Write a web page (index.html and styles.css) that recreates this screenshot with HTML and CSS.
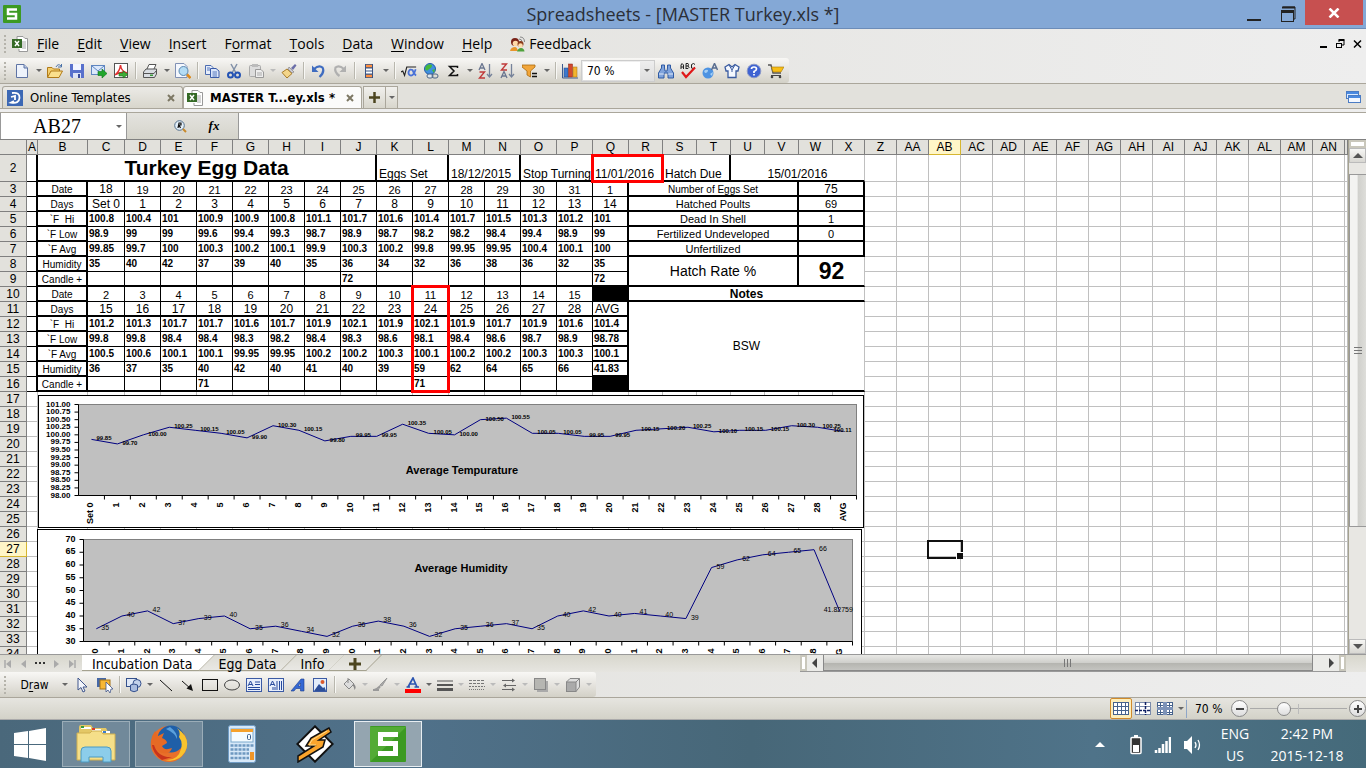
FILE: index.html
```
<!DOCTYPE html>
<html lang="en">
<head>
  <meta charset="UTF-8" />
  <meta name="viewport" content="width=device-width, initial-scale=1.0" />
  <title>Spreadsheets - [MASTER Turkey.xls *]</title>
  <link rel="stylesheet" href="styles.css">
</head>
<body>

  <header class="titlebar">
    <svg class="app-logo" viewBox="0 0 20 20" width="20" height="20"><rect x="1" y="1" width="18" height="18" rx="1" fill="#3c9a22"/><path d="M15 5.500H6V10H14V14.500H5" fill="none" stroke="#fff" stroke-width="2.500"/></svg>
    <h1>Spreadsheets - [MASTER Turkey.xls *]</h1>
    <div class="window-buttons">
      <button aria-label="Minimize"><svg width="16" height="20"><path d="M1 17H15" stroke="#222" stroke-width="2"/></svg></button>
      <button aria-label="Restore"><svg width="16" height="20"><path d="M3 5V4H15V16H14" fill="none" stroke="#222" stroke-width="1"/><path d="M2 4.500H15" stroke="#222" stroke-width="2"/><rect x="1.500" y="7.500" width="12" height="11" fill="#84a8d6" stroke="#222"/><path d="M1 8.500H14" stroke="#222" stroke-width="3"/></svg></button>
      <button class="close" aria-label="Close"><svg width="12" height="10"><path d="M1.500 .5L10.500 9.500M10.500 .5L1.500 9.500" stroke="#fff" stroke-width="2.500"/></svg></button>
    </div>
  </header>

  <nav class="menubar">
    <span class="handle"></span>
    <svg class="doc-icon" viewBox="0 0 16 16" width="16" height="16"><path d="M5 .5H11L13 2.500H15.500V15.500H7V13M5 .5V3" fill="#fff" stroke="#999"/><path d="M10 6H14M10 8H14M10 10H14M10 12H14" stroke="#aaa"/><rect y="3" width="10" height="9" fill="#356a26"/><path d="M3 5L7 10M7 5L3 10" stroke="#fff" stroke-width="1.500"/></svg>
    <button><u>F</u>ile</button>
    <button><u>E</u>dit</button>
    <button><u>V</u>iew</button>
    <button><u>I</u>nsert</button>
    <button>F<u>o</u>rmat</button>
    <button><u>T</u>ools</button>
    <button><u>D</u>ata</button>
    <button><u>W</u>indow</button>
    <button><u>H</u>elp</button>
    <button class="feedback"><svg viewBox="0 0 16 16" width="16" height="16"><path d="M9 3Q12 3 12 6M10 1Q14.500 1 14.500 6" fill="none" stroke="#888"/><circle cx="5" cy="6" r="4" fill="#7a2318"/><circle cx="5.500" cy="7.500" r="2.800" fill="#ffd9a8"/><circle cx="10.500" cy="8" r="3" fill="#8a3a1c"/><circle cx="10.500" cy="9.500" r="2.300" fill="#ffdcae"/><path d="M0 15Q1 11 5 11Q7 11 8 15Z" fill="#e8952c"/><path d="M7 15.500Q8 12 11 12Q14 12 14.500 15.500Z" fill="#4fa23c"/></svg>Feed<u>b</u>ack</button>
    <div class="doc-buttons">
      <button aria-label="Minimize document"><svg width="8" height="10"><path d="M0 8H7" stroke="#000" stroke-width="2"/></svg></button>
      <button aria-label="Restore document"><svg width="9" height="10"><path d="M3 3V1.500H8V6H6" fill="none" stroke="#000"/><path d="M2.500 1H8.500" stroke="#000" stroke-width="2"/><rect x=".5" y="4.500" width="5" height="4" fill="none" stroke="#000"/></svg></button>
      <button aria-label="Close document"><svg width="9" height="10"><path d="M1 1.500L8 8.500M8 1.500L1 8.500" stroke="#000" stroke-width="1.500"/></svg></button>
    </div>
  </nav>

  <div class="toolbar-row">
    <div class="toolbar">
      <span class="handle"></span>
      <button aria-label="New"><svg viewBox="0 0 16 16"><path d="M2.500 1.500H10L13.500 5V14.500H2.500Z" fill="#eef3fc" stroke="#5f74a4"/><path d="M10 1.500V5H13.500" fill="#b9c8e4" stroke="#5f74a4"/></svg></button>
      <button class="drop" aria-label="New options"></button>
      <button aria-label="Open"><svg viewBox="0 0 16 16"><path d="M.5 14V4.500H5L6.500 6H12.500V8" fill="#f5cf6c" stroke="#b07a18"/><path d="M.5 14.500L4 8H15.500L12 14.500Z" fill="#fbe08c" stroke="#b07a18"/><path d="M9 4Q11 0 14 3M14.500 1V4H11" fill="none" stroke="#4a71a8"/></svg></button>
      <button aria-label="Save"><svg viewBox="0 0 16 16"><path d="M1 1H15V15H3L1 13Z" fill="#5870cc"/><rect x="4" y="1" width="8" height="6" fill="#f2f5ff"/><rect x="4" y="10" width="8" height="5" fill="#dce2f5"/><rect x="9" y="11" width="2" height="4" fill="#384a9c"/></svg></button>
      <button aria-label="Send mail"><svg viewBox="0 0 16 16"><rect x=".5" y="2.500" width="13" height="9" fill="#dbe8fb" stroke="#5f86c0"/><path d="M1 3L7 8L13 3" fill="none" stroke="#5f86c0"/><path d="M7 8.500H11V6L16 10.500L11 15V12.500H7Z" fill="#21a62b" stroke="#0b7417" stroke-width=".6"/></svg></button>
      <button aria-label="Export PDF"><svg viewBox="0 0 16 16"><rect x="1.500" y=".5" width="13" height="14" fill="#fff" stroke="#555"/><path d="M2 12Q7 8 7.500 2Q8 8 14 10Q8 8 2 12" fill="none" stroke="#e03030" stroke-width="1.500"/><path d="M6 10H10V8L15 11.500L10 15V13H6Z" fill="#3fae38" stroke="#1b6e1b" stroke-width=".6"/></svg></button>
      <span class="sep"></span>
      <button aria-label="Print"><svg viewBox="0 0 16 16"><path d="M5 6L7 1.500H14L12 6" fill="#fff" stroke="#555"/><path d="M1.500 9L4 6H14.500V11L12.500 14.500H1.500Z" fill="#d9dde2" stroke="#555"/><path d="M2 10.500H12L14 8" fill="none" stroke="#555"/><rect x="8" y="11.500" width="3" height="1.500" fill="#3a9c3a"/></svg></button>
      <button class="drop" aria-label="Print options"></button>
      <button aria-label="Print preview"><svg viewBox="0 0 16 16"><path d="M.5 .5H9L12 3.500V14.500H.5Z" fill="#f4f7fd" stroke="#8090b4"/><circle cx="8.500" cy="8" r="4.500" fill="#b4dcf4" stroke="#5c88b0"/><path d="M12 11.500L15.500 15" stroke="#dd8a1c" stroke-width="2.500"/></svg></button>
      <span class="sep"></span>
      <button aria-label="Copy"><svg viewBox="0 0 16 16"><path d="M1.500 2.500H7L9 4.500V11.500H1.500Z" fill="#e6edfa" stroke="#4c6cb0"/><path d="M6.500 5.500H12L15 8V14.500H6.500Z" fill="#dbe6fb" stroke="#3a5ba8"/><path d="M3 5H6M3 7H6M8.500 9H13M8.500 11H13M8.500 13H13" stroke="#5476bc"/></svg></button>
      <button aria-label="Cut"><svg viewBox="0 0 16 16"><path d="M5 1L10 10M11 1L6 10" stroke="#8090a8" stroke-width="1.500"/><circle cx="4.500" cy="12" r="2.500" fill="none" stroke="#2453b4" stroke-width="2"/><circle cx="11.500" cy="12" r="2.500" fill="none" stroke="#2453b4" stroke-width="2"/></svg></button>
      <button aria-label="Paste"><svg viewBox="0 0 16 16"><rect x="1.500" y="2.500" width="11" height="11" rx="1" fill="#ddd" stroke="#aaa"/><rect x="4" y="1" width="6" height="3" fill="#bbb"/><path d="M7.500 6.500H13L15.500 9V14.500H7.500Z" fill="#eee" stroke="#999"/><path d="M9 10H14M9 12H14" stroke="#aaa"/></svg></button>
      <button class="drop dim" aria-label="Paste options"></button>
      <button aria-label="Format painter"><svg viewBox="0 0 16 16"><path d="M10 5L14 1L15.500 2.500L12 7Z" fill="#6b6ea8"/><path d="M8 4L13 9L11 10L7 6Z" fill="#c9c9d8" stroke="#777" stroke-width=".6"/><path d="M6 6L11 10.500L6 15L1 9.500Z" fill="#f3d58a" stroke="#a77b2a"/></svg></button>
      <span class="sep"></span>
      <button aria-label="Undo"><svg viewBox="0 0 16 16"><path d="M4 6Q9 1.500 12.500 4.500Q15 9 9.500 14" fill="none" stroke="#3f6cc0" stroke-width="2.200"/><path d="M2 2.500V9H8.500Z" fill="#3f6cc0"/></svg></button>
      <button aria-label="Redo"><svg viewBox="0 0 16 16"><path d="M12 6Q7 1.500 3.500 4.500Q2 9 7.500 13" fill="none" stroke="#b0b0b0" stroke-width="2.200"/><path d="M14 2.500V9H7.500Z" fill="#b0b0b0"/></svg></button>
      <span class="sep"></span>
      <button aria-label="Rows"><svg viewBox="0 0 16 16"><rect x="4" y="1" width="8" height="14" fill="#3b5484"/><path d="M5 3H11" stroke="#ff9040" stroke-width="2.500"/><path d="M5 6.500H11M5 9.500H11" stroke="#fff" stroke-width="2"/><path d="M5 13H11" stroke="#ff9040" stroke-width="2.500"/></svg></button>
      <button class="drop" aria-label="Row options"></button>
      <span class="sep"></span>
      <button aria-label="Equation"><svg viewBox="0 0 18 16"><path d="M0 9L2 8L4 13L6.500 3.500H17" fill="none" stroke="#222" stroke-width="1.300"/><path d="M16.500 6Q14 14 10.500 13Q8 12 8.500 9Q10 5 13 7Q15 12 17 13" fill="none" stroke="#4a72d8" stroke-width="2"/></svg></button>
      <button aria-label="Hyperlink"><svg viewBox="0 0 16 16"><circle cx="7" cy="6" r="5.500" fill="#3f8fe0" stroke="#215ba8"/><path d="M3 3Q6 0 9 2Q9 5 6 6Q4 9 2 6ZM9 7L12 6L11 10Z" fill="#45b83a"/><rect x="4" y="11" width="6" height="4" rx="2" fill="#dfe7ef" stroke="#4c6688"/><rect x="9" y="11" width="6" height="4" rx="2" fill="none" stroke="#4c6688"/></svg></button>
      <button aria-label="AutoSum"><svg viewBox="0 0 16 16"><path d="M12.500 5V3.500H4.500L9 8L4.500 12.500H12.500V11" fill="none" stroke="#111" stroke-width="1.500"/></svg></button>
      <button class="drop" aria-label="Sum options"></button>
      <button aria-label="Sort ascending"><svg viewBox="0 0 16 16"><path d="M1 7L4 .5L7 7M2 5H6" fill="none" stroke="#6a7690" stroke-width="1.300"/><path d="M1.500 9H6.500L1.500 15H7" fill="none" stroke="#c03a3a" stroke-width="1.400"/><path d="M11.500 1V13M9 11L11.500 14L14 11" fill="none" stroke="#76829a" stroke-width="1.300"/></svg></button>
      <button aria-label="Sort descending"><svg viewBox="0 0 16 16"><path d="M1.500 1H6.500L1.500 7H7" fill="none" stroke="#c03a3a" stroke-width="1.400"/><path d="M1 15L4 8.500L7 15M2 13H6" fill="none" stroke="#6a7690" stroke-width="1.300"/><path d="M11.500 1V13M9 11L11.500 14L14 11" fill="none" stroke="#76829a" stroke-width="1.300"/></svg></button>
      <button aria-label="Filter"><svg viewBox="0 0 16 16"><path d="M0 2H13V4L8.500 8V14L5 12V8L0 4Z" fill="#f2a63a" stroke="#a86a10" stroke-width=".8"/><path d="M10 10.500H15M10 13.500H15" stroke="#111" stroke-width="1.700"/></svg></button>
      <button class="drop" aria-label="Filter options"></button>
      <span class="sep"></span>
      <button aria-label="Chart"><svg viewBox="0 0 16 16"><path d="M.5 1V15H16" fill="none" stroke="#3c5a90"/><rect x="2" y="5" width="4" height="9" fill="#3f79cc" stroke="#1f4a8c" stroke-width=".5"/><rect x="6.500" y="1" width="4" height="13" fill="#d2492e" stroke="#8a2010" stroke-width=".5"/><rect x="11" y="4" width="4" height="10" fill="#f2b42e" stroke="#a87010" stroke-width=".5"/></svg></button>
      <div class="zoom-box"><select aria-label="Zoom"><option>70 %</option></select></div>
      <button aria-label="Find"><svg viewBox="0 0 16 16"><path d="M3.500 2H6.500V5L7 8H9L9.500 5V2H12.500V5L15.500 10V15H10V10H6V15H.5V10L3.500 5Z" fill="#7fa3dc" stroke="#2f5aa4"/><path d="M1 11H6M10 11H15" stroke="#dfe9fa"/></svg></button>
      <button aria-label="Spelling"><svg viewBox="0 0 16 16"><path d="M1 6V2L2 .5L3.500 2V6M1 4H3.500M6 .5V6M6 .5H8L8.500 1.500L8 3H6M8 3L9 4.500L8 5.500H6M15 1.500L13.500 .5L11.500 1.500V5L13.500 5.500L15 4.500" fill="none" stroke="#222"/><path d="M2 9L6 14L15 4.500" fill="none" stroke="#e01818" stroke-width="2.200"/></svg></button>
      <button aria-label="Translate"><svg viewBox="0 0 16 16"><circle cx="6" cy="10" r="5.500" fill="#4d93e2"/><path d="M2 8Q4 6 6 7Q6 10 3 10ZM8 11L11 9L10 13Z" fill="#a5d0f6"/><path d="M9.500 7L12.500 .5L15.500 7M10.500 5H14.500" fill="none" stroke="#5a6e90" stroke-width="1.500"/></svg></button>
      <button aria-label="Skins"><svg viewBox="0 0 16 16"><path d="M5 1.500L1 4L2 8H4V14.500H12V8H14L15 4L11 1.500L8 4Z" fill="#f4f8ff" stroke="#3a5ba0" stroke-width="1.300"/><path d="M5 2L8 7L11 2M8 7V9" fill="none" stroke="#3a5ba0"/></svg></button>
      <button aria-label="Help"><svg viewBox="0 0 16 16"><circle cx="8" cy="8" r="6.800" fill="#3f63d2" stroke="#8a98c8"/><path d="M5.500 6Q5.500 4 8 4Q10.500 4 10.500 6Q10.500 7.500 8 8.500V10M8 11V12.500" fill="none" stroke="#fff" stroke-width="1.700"/></svg></button>
      <button aria-label="Store"><svg viewBox="0 0 16 16"><path d="M0 2H3L5 10H13" fill="none" stroke="#555" stroke-width="1.400"/><path d="M3.500 4H16L13 9H5Z" fill="#f8bd14" stroke="#a67b08" stroke-width=".6"/><path d="M3 12.500H13" stroke="#444"/><circle cx="4" cy="14" r="1.300" fill="#444"/><circle cx="12" cy="14" r="1.300" fill="#444"/></svg></button>
    </div>
  </div>

  <div class="doc-tabs">
    <div class="doc-tab">
      <svg viewBox="0 0 16 16" width="16" height="16"><rect width="16" height="16" fill="#3c68b4"/><path d="M5 3Q13 2 12.500 8Q12 14 4 12.500L7 11M4 7L8 6V10" fill="none" stroke="#fff" stroke-width="1.800"/></svg>
      <a href="#templates">Online Templates</a>
      <button class="tab-close" aria-label="Close tab"><svg width="8" height="8"><path d="M1 1L7 7M7 1L1 7" stroke="#7d7864" stroke-width="2"/></svg></button>
    </div>
    <div class="doc-tab active">
      <svg viewBox="0 0 16 16" width="16" height="16"><path d="M5 .5H11L13 2.500H15.500V15.500H7V13M5 .5V3" fill="#fff" stroke="#999"/><path d="M10 6H14M10 8H14M10 10H14M10 12H14" stroke="#aaa"/><rect y="3" width="10" height="9" fill="#356a26"/><path d="M3 5L7 10M7 5L3 10" stroke="#fff" stroke-width="1.500"/></svg>
      <a href="#master">MASTER T...ey.xls *</a>
      <button class="tab-close" aria-label="Close tab"><svg width="8" height="8"><path d="M1 1L7 7M7 1L1 7" stroke="#7d7864" stroke-width="2"/></svg></button>
    </div>
    <div class="new-tab">
      <button aria-label="New tab"><svg width="11" height="11"><path d="M5.500 0V11M0 5.500H11" stroke="#4c451f" stroke-width="2.500"/></svg></button>
      <button class="drop" aria-label="Tab list"></button>
    </div>
    <button class="windows-list" aria-label="Windows"><svg width="16" height="13"><rect x=".5" y=".5" width="12" height="7" fill="#dcebff" stroke="#4b7cc4"/><path d="M1 2H12" stroke="#4b8ae0" stroke-width="2"/><rect x="2.500" y="4.500" width="12" height="7" fill="#f4f8ff" stroke="#4b7cc4"/><path d="M3 6H14" stroke="#4b8ae0" stroke-width="2"/></svg></button>
  </div>

  <div class="formula-bar">
    <div class="name-box"><input type="text" value="AB27" aria-label="Name box"><span class="drop"></span></div>
    <div class="formula-buttons">
      <button aria-label="Look up"><svg viewBox="0 0 13 13" width="13" height="13"><circle cx="5.500" cy="5.500" r="4.800" fill="#e4f0fa" stroke="#54708c"/><path d="M4 8L5 3H7L7 5H5L6.500 8" fill="none" stroke="#111" stroke-width="1.200"/><path d="M9 9L12 12" stroke="#c98a2a" stroke-width="2"/></svg></button>
      <button class="fx" aria-label="Insert function">fx</button>
    </div>
    <input class="formula" type="text" aria-label="Formula">
  </div>

  <main class="workbook">
    <div class="sheet" id="sheet">
      <table id="grid"></table>
      <div class="mark mark-stop"></div>
      <div class="mark mark-day"></div>
      <svg class="chart chart-temp" id="tempChart" width="826" height="133"></svg>
      <svg class="chart chart-hum" id="humChart" width="825" height="150"></svg>
    </div>
    <div class="vscroll">
      <span class="split"></span>
      <button class="up" aria-label="Scroll up"></button>
      <div class="vtrack"><div class="vthumb"></div></div>
      <button class="down" aria-label="Scroll down"></button>
    </div>
  </main>

  <div class="sheet-bar">
    <div class="sheet-nav">
      <button aria-label="First sheet"><svg width="8" height="8"><path d="M1 0V8" stroke="#aaa" stroke-width="1.500"/><path d="M7 0V8L2 4Z" fill="#aaa"/></svg></button>
      <button aria-label="Previous sheet"><svg width="8" height="8"><path d="M6 0V8L1 4Z" fill="#aaa"/></svg></button>
      <button aria-label="Sheet list"><svg width="10" height="8"><path d="M0 3H2M4 3H6M8 3H10" stroke="#333" stroke-width="2"/></svg></button>
      <button aria-label="Next sheet"><svg width="8" height="8"><path d="M2 0V8L7 4Z" fill="#aaa"/></svg></button>
      <button aria-label="Last sheet"><svg width="8" height="8"><path d="M7 0V8" stroke="#aaa" stroke-width="1.500"/><path d="M1 0V8L6 4Z" fill="#aaa"/></svg></button>
    </div>
    <div class="sheet-tabs">
      <button class="sheet-tab active"><span>Incubation Data</span></button>
      <button class="sheet-tab"><span>Egg Data</span></button>
      <button class="sheet-tab"><span>Info</span></button>
      <button class="sheet-tab add" aria-label="Add sheet"><span><svg width="14" height="14"><path d="M7 1V13M1 7H13" stroke="#4c451f" stroke-width="3"/></svg></span></button>
    </div>
    <div class="hscroll">
      <span class="hsplit"></span>
      <button class="left" aria-label="Scroll left"></button>
      <div class="htrack"><div class="hthumb"></div></div>
      <button class="right" aria-label="Scroll right"></button>
      <span class="hsplit"></span>
    </div>
    <span class="corner"></span>
  </div>

  <div class="draw-row">
    <div class="toolbar draw">
      <span class="handle"></span>
      <button class="draw-label">D<u>r</u>aw</button>
      <button class="drop wide" aria-label="Draw menu"></button>
      <button aria-label="Select"><svg viewBox="0 0 16 16"><path d="M3 1V13L6 10.500L8 15L10 14L8 10H12Z" fill="#f2f5fb" stroke="#40568c"/></svg></button>
      <button aria-label="Select objects"><svg viewBox="0 0 16 16"><rect x="0" y="1" width="9" height="9" fill="#4568a8"/><rect x="3" y="3" width="10" height="9" fill="#f8b834" stroke="#a87416"/><path d="M9 5V15L11 13L13 16L14 12H16Z" fill="#fff" stroke="#40568c" stroke-width=".8"/></svg></button>
      <span class="sep"></span>
      <button aria-label="Shapes"><svg viewBox="0 0 16 16"><rect x=".5" y="1.500" width="10" height="8" fill="#dfe8f7" stroke="#34508c"/><circle cx="11" cy="6.500" r="4" fill="#c3d2ec" stroke="#34508c"/><path d="M4.500 8V13.500Q8 16 11.500 13.500V8Q8 6 4.500 8" fill="#a9bcdf" stroke="#34508c"/></svg></button>
      <button class="drop" aria-label="Shapes menu"></button>
      <button aria-label="Line"><svg viewBox="0 0 16 16"><path d="M2 3L14 14" stroke="#111"/></svg></button>
      <button aria-label="Arrow"><svg viewBox="0 0 16 16"><path d="M2 4L11 12" stroke="#111"/><path d="M13 14L6.500 11.500L11 7Z" fill="#111"/></svg></button>
      <button aria-label="Rectangle"><svg viewBox="0 0 16 16"><rect x=".5" y="2.500" width="15" height="11" fill="none" stroke="#111"/></svg></button>
      <button aria-label="Oval"><svg viewBox="0 0 16 16"><ellipse cx="8" cy="8" rx="7.500" ry="5" fill="none" stroke="#444"/></svg></button>
      <button aria-label="Text box"><svg viewBox="0 0 16 16"><rect x=".5" y="1.500" width="15" height="13" fill="#e7eefb" stroke="#3b5aa4"/><path d="M2 9L4.500 4L7 9M3 7.500H6M9 5H14M9 7.500H14M2 10.500H14M2 12.500H14" fill="none" stroke="#27499c"/></svg></button>
      <button aria-label="Vertical text box"><svg viewBox="0 0 16 16"><rect x=".5" y="1.500" width="15" height="13" fill="#e7eefb" stroke="#3b5aa4"/><path d="M2 9L4.500 4L7 9M3 7.500H6M9 4V13M11.500 4V13M13.500 4V13M5 10V13M7 10V13" fill="none" stroke="#27499c"/></svg></button>
      <button aria-label="WordArt"><svg viewBox="0 0 16 16"><path d="M1 14L11 2H14V14H10.500V11.500H6L4 14ZM8 9H10.500V6Z" fill="#3568d4" stroke="#1b3d8c" stroke-width=".6" fill-rule="evenodd"/></svg></button>
      <button aria-label="Picture"><svg viewBox="0 0 16 16"><rect x="1.500" y="1.500" width="13" height="13" fill="#e3edfa" stroke="#3b5aa4"/><path d="M2 14L7 7L11 11L12.500 10L14 14Z" fill="#2c4f9a"/><circle cx="10.500" cy="5" r="2" fill="#dc5a2c"/></svg></button>
      <span class="sep"></span>
      <button aria-label="Fill colour"><svg viewBox="0 0 16 16"><path d="M3 7L8 2L13 7L8 12Z" fill="#ddd" stroke="#888"/><path d="M7 1V6" stroke="#888"/><path d="M13 7Q16 10 13.500 13Q13 9 11 8" fill="#888"/></svg></button>
      <button class="drop dim" aria-label="Fill menu"></button>
      <button aria-label="Line colour"><svg viewBox="0 0 16 16"><path d="M14 1L9 9L7 8Z" fill="#aaa" stroke="#999"/><path d="M7 8Q9 12 4 12L1 12Q4 11 7 8" fill="#999"/><path d="M0 13H6" stroke="#999" stroke-width="2"/></svg></button>
      <button class="drop dim" aria-label="Line colour menu"></button>
      <button aria-label="Font colour"><svg viewBox="0 0 16 16"><path d="M3 10L8 1L12 10M5 7H11M1.500 10H5M9.500 10H14" fill="none" stroke="#2c55b0" stroke-width="1.700"/><rect x="0" y="12" width="16" height="4" fill="#f00"/></svg></button>
      <button class="drop" aria-label="Font colour menu"></button>
      <button aria-label="Line style"><svg viewBox="0 0 16 16"><path d="M0 4H16" stroke="#555"/><path d="M0 8H16" stroke="#555" stroke-width="2"/><path d="M0 12.500H16" stroke="#555" stroke-width="3"/></svg></button>
      <button class="drop dim" aria-label="Line style menu"></button>
      <button aria-label="Dash style"><svg viewBox="0 0 16 16"><path d="M0 3.500H16M0 6.500H16" stroke="#777" stroke-dasharray="3 1"/><path d="M0 9.500H16" stroke="#777" stroke-dasharray="2 1"/><path d="M0 12.500H16" stroke="#777" stroke-dasharray="1 1"/></svg></button>
      <button class="drop dim" aria-label="Dash menu"></button>
      <button aria-label="Arrow style"><svg viewBox="0 0 16 16"><path d="M1 3.500H12M4 8.500H15M1 12.500H12" stroke="#666"/><path d="M11 1.500L14 3.500L11 5.500ZM5 6.500L2 8.500L5 10.500ZM11 10.500L14 12.500L11 14.500Z" fill="#666"/></svg></button>
      <button class="drop dim" aria-label="Arrow menu"></button>
      <button aria-label="Shadow"><svg viewBox="0 0 16 16"><rect x="4" y="4" width="11" height="11" fill="#aaa"/><rect x="1.500" y="1.500" width="11" height="11" fill="#b6b6b2" stroke="#888"/></svg></button>
      <button class="drop dim" aria-label="Shadow menu"></button>
      <button aria-label="3D"><svg viewBox="0 0 16 16"><path d="M1.500 5L5 1.500H14.500V10L11 14.500H1.500Z" fill="#ddd" stroke="#888"/><rect x="1.500" y="5" width="9.500" height="9.500" fill="#aaa" stroke="#888"/><path d="M11 5L14.500 1.500" stroke="#888"/></svg></button>
      <button class="drop dim" aria-label="3D menu"></button>
    </div>
  </div>

  <footer class="statusbar">
    <button class="view active" aria-label="Normal view"><svg width="16" height="14"><rect x=".5" y=".5" width="15" height="12" fill="#fff" stroke="#46628c"/><path d="M4.500 0V13M8.500 0V13M12.500 0V13M0 4.500H16M0 8.500H16" stroke="#46628c"/></svg></button>
    <button class="view" aria-label="Page break view"><svg width="16" height="14"><rect x=".5" y=".5" width="15" height="12" fill="#fff" stroke="#7a8bab"/><path d="M4.500 0V13M0 4.500H16" stroke="#7a8bab"/><path d="M10.500 0V13M0 8.500H16" stroke="#112064" stroke-width="1.500" stroke-dasharray="3 1"/></svg></button>
    <button class="view" aria-label="Reading view"><svg width="16" height="14"><rect x=".5" y=".5" width="15" height="12" fill="#fff" stroke="#46628c"/><path d="M3.500 0V13M12.500 0V13M0 3.500H16M0 10.500H16" stroke="#46628c"/><rect x="6" y="0" width="4" height="13" fill="#7d93b8"/><rect x="0" y="5" width="16" height="3" fill="#7d93b8"/></svg></button>
    <span class="drop"></span>
    <span class="status-sep"></span>
    <span class="zoom-text">70 %</span>
    <button class="round" aria-label="Zoom out"><svg width="8" height="8"><path d="M0 4H8" stroke="#444" stroke-width="2"/></svg></button>
    <input type="range" min="0" max="100" value="33" aria-label="Zoom level">
    <button class="round" aria-label="Zoom in"><svg width="8" height="8"><path d="M0 4H8M4 0V8" stroke="#444" stroke-width="2"/></svg></button>
  </footer>

  <div class="taskbar">
    <button class="start" aria-label="Start"><svg viewBox="0 0 32 33" width="32" height="33"><path d="M0 5L14 3V16H0ZM15 3L32 0V16H15ZM0 17H14V30L0 28ZM15 17H32V33L15 30Z" fill="#fff"/></svg></button>
    <button class="task open" aria-label="File Explorer"><svg viewBox="0 0 40 40" width="40" height="40"><path d="M3 3Q3 1 5 1H15L17 4H30L32 8H34V36H3Z" fill="#e3c766"/><path d="M5 3H15V5H5ZM16 5H25V7H16ZM26 7H34V9H26Z" fill="#fff"/><rect x="5" y="2" width="3" height="2" fill="#3a9c3a"/><rect x="16" y="4" width="3" height="2" fill="#dc3a2a"/><rect x="27" y="7" width="3" height="2" fill="#3a7ccc"/><path d="M1 9H14L16 7H25L27 10H39V36H1Z" fill="#f5df89" stroke="#d0b050"/><path d="M5 38V27Q5 23 9 23H31Q35 23 35 27V38H27V33H13V38Z" fill="#8ccdea" stroke="#4b9ac2"/></svg></button>
    <button class="task open" aria-label="Firefox"><svg viewBox="0 0 38 38" width="38" height="38"><circle cx="19" cy="19" r="18" fill="#e8702a"/><circle cx="21" cy="14" r="13.500" fill="#1f5fa8"/><path d="M20 2Q28 8 27 14Q25 8 16 4Z" fill="#5aa0dc"/><path d="M27 3Q42 14 35 27Q28 38 15 35Q28 36 31 24Q33 17 29 12Q31 7 27 3Z" fill="#f9c32e"/><path d="M1 16Q2 10 5 6L8 11L14 8L12 13Q17 15 17 18L12 21Q14 26 22 23Q20 30 12 28Q5 26 4 18Q2 21 3 27Q0 22 1 16Z" fill="#e66a24"/><path d="M4 20Q8 33 22 32L12 35Q3 29 2 20Z" fill="#c8341c"/></svg></button>
    <button class="task" aria-label="Calculator"><svg viewBox="0 0 28 38" width="28" height="38"><rect x=".5" y=".5" width="27" height="37" rx="2" fill="#d7e8f8" stroke="#6f9bc4"/><rect x="3" y="4" width="22" height="13" fill="#f4fbff" stroke="#7aa8cc"/><rect x="3" y="4" width="22" height="3" fill="#f5a12c"/><rect x="19.500" y="9.500" width="3" height="5" rx="1" fill="none" stroke="#3b5e8c"/><path d="M2.500 20.500H26M2.500 24.500H21M2.500 28.500H21M2.500 33H21" stroke="#6e98c0" stroke-width="2.500" stroke-dasharray="3 1"/><rect x="22" y="27" width="4" height="8" fill="#ef962a"/></svg></button>
    <button class="task" aria-label="Winamp"><svg viewBox="0 0 38 38" width="38" height="38"><rect x="6.500" y="6.500" width="25" height="25" transform="rotate(45 19 19)" fill="#fff" stroke="#111" stroke-width="2"/><path d="M33 3L15 13L10 21H18L2 31V37L27 22L29 15H23L35 7Z" fill="#fba52c" stroke="#111" stroke-width="1.500"/><path d="M31 6L16 15L13 20H20" fill="none" stroke="#ffdc8c"/></svg></button>
    <button class="task current" aria-label="Spreadsheets"><svg viewBox="0 0 36 36" width="36" height="36"><rect width="36" height="36" rx="1" fill="#3c9a22"/><path d="M0 36V1H36Z" fill="#53ab35"/><path d="M28 8.500H10.500V17.500H25.500V27.500H8" fill="none" stroke="#fff" stroke-width="5"/></svg></button>
    <div class="tray">
      <button class="tray-up" aria-label="Show hidden icons"><svg width="10" height="6"><path d="M5 0L10 5H0Z" fill="#fff"/></svg></button>
      <svg width="12" height="20"><rect x="1" y="2.500" width="10" height="16" rx="1" fill="#333" stroke="#fff" stroke-width="1.500"/><rect x="4" y="0" width="4" height="2" fill="#fff"/><rect x="3" y="10" width="6" height="7" fill="#fff"/></svg>
      <svg width="17" height="18"><path d="M2 17V14M5.500 17V12M9 17V8M12.500 17V5M16 17V1" stroke="#fff" stroke-width="2.500"/></svg>
      <svg width="20" height="20"><path d="M1 6H4L9 1V19L4 14H1Z" fill="#fff"/><path d="M12 7Q14 10 12 13M15 5Q18 10 15 15" fill="none" stroke="#fff" stroke-width="1.300"/></svg>
      <div class="lang"><span>ENG</span><span>US</span></div>
      <div class="clock"><span>2:42 PM</span><span>2015-12-18</span></div>
    </div>
  </div>

  <script src="script.js"></script>
</body>
</html>
```
FILE: styles.css
```
* {
  box-sizing: border-box;
}

body {
  margin: 0;
  height: 100vh;
  display: flex;
  flex-direction: column;
  overflow: hidden;
  background: #e2e1dc;
  color: #000;
  font-family: "DejaVu Sans Condensed", "DejaVu Sans", sans-serif;
  font-size: 12px;
}

button, input, select {
  font: inherit;
  color: inherit;
  margin: 0;
  padding: 0;
  border: none;
  background: none;
  border-radius: 0;
}

button {
  display: flex;
  align-items: center;
  justify-content: center;
  flex: none;
}

u {
  text-underline-offset: 2px;
}

/* title bar */
.titlebar {
  display: flex;
  align-items: center;
  height: 29px;
  flex: none;
  background: #84a8d6;
  border-bottom: 1px solid #6c8cb8;
}

.app-logo {
  margin-left: 2px;
  width: 20px;
}

.titlebar h1 {
  flex: 1;
  margin: 0 0 0 107px;
  text-align: center;
  font-family: "Open Sans", sans-serif;
  font-size: 18px;
  font-weight: normal;
  line-height: 28px;
  color: #2b2f38;
}

.window-buttons {
  display: flex;
  align-self: flex-start;
  padding-right: 3px;
}

.window-buttons button {
  width: 34px;
  height: 25px;
}

.window-buttons .close {
  width: 58px;
  background: #c75050;
}

/* menus */
.menubar {
  display: flex;
  align-items: center;
  height: 29px;
  flex: none;
  background: linear-gradient(to right, #e0dfda, #eee);
  font-family: "Open Sans", sans-serif;
  font-size: 14px;
}

.handle {
  width: 2px;
  height: 18px;
  margin: 0 5px 0 4px;
  flex: none;
  background: repeating-linear-gradient(#b5b3ab 0 2px, transparent 2px 4px);
}

.menubar > button {
  padding: 0 9px;
  height: 26px;
  display: block;
}

.doc-icon {
  margin-left: 1px;
}

.menubar > .feedback {
  display: flex;
  white-space: pre;
}

.feedback svg {
  margin-right: 3px;
}

.doc-buttons {
  display: flex;
  gap: 8px;
  margin-left: auto;
  padding-right: 4px;
}

/* toolbars */
.toolbar-row, .draw-row {
  display: flex;
  flex: none;
  height: 25px;
  background: linear-gradient(to right, #e0dfda, #eee);
}

.toolbar {
  display: flex;
  align-items: center;
  padding-right: 2px;
  border-radius: 0 3px 3px 0;
  background: linear-gradient(#f8f7f5, #e6e4df 50%, #d3d1c7);
}

.toolbar > button {
  width: 22px;
  height: 22px;
}

.toolbar svg {
  width: 16px;
  height: 16px;
}

.toolbar > .drop {
  width: 11px;
}

.drop::after {
  content: "";
  border: 3px solid transparent;
  border-top-color: #666;
  border-bottom: none;
}

.drop.dim::after {
  border-top-color: #bbb;
}

.sep {
  width: 1px;
  height: 17px;
  margin: 0 3px;
  flex: none;
  background: #b9b7ae;
  box-shadow: 1px 0 #f8f8f5;
}

.zoom-box {
  display: flex;
  width: 74px;
  height: 22px;
  border: 1px solid #ccc;
  padding: 1px;
  background: linear-gradient(#eee, #ddd);
}

.zoom-box select {
  appearance: none;
  width: 57px;
  height: 18px;
  padding-left: 4px;
  background: #fff;
  font-size: 12px;
}

.zoom-box::after {
  content: "";
  margin: 7px auto 0;
  border: 3px solid transparent;
  border-top-color: #666;
  border-bottom: none;
}

/* document tabs */
.doc-tabs {
  display: flex;
  align-items: stretch;
  flex: none;
  height: 30px;
  padding: 2px 4px 4px 2px;
  border-top: 1px solid #aaa69b;
  border-bottom: 1px solid #aaa69b;
  background: linear-gradient(#e2e1dc 24px, #aaa69b 24px 25px, #eee 25px);
}

.doc-tab {
  display: flex;
  align-items: center;
  width: 181px;
  padding: 0 7px 0 4px;
  border: 1px solid #aaa69b;
  border-bottom: none;
  border-radius: 3px 3px 0 0;
  background: linear-gradient(#ebeae6, #d8d6cc);
  font-size: 13px;
}

.doc-tab.active {
  width: 179px;
  padding-left: 3px;
  background: #fbfbfa;
  font-weight: bold;
}

.doc-tab a {
  flex: 1;
  margin-left: 7px;
  color: #000;
  text-decoration: none;
  white-space: nowrap;
}

.new-tab {
  display: flex;
  margin-left: 1px;
  border: 1px solid #aaa69b;
  border-bottom: none;
  background: linear-gradient(#f1f0ed, #d8d6cc);
}

.new-tab button {
  width: 21px;
}

.new-tab .drop {
  width: 12px;
  border-left: 1px solid #aaa69b;
}

.windows-list {
  margin-left: auto;
}

/* formula bar */
.formula-bar {
  display: flex;
  flex: none;
  height: 27px;
  background: #fff;
  border-bottom: 1px solid #808080;
}

.name-box {
  display: flex;
  align-items: center;
  width: 127px;
  border-left: 1px solid #999;
  border-right: 1px solid #999;
}

.name-box input {
  width: 112px;
  text-align: center;
  font-family: "Liberation Serif", serif;
  font-size: 20px;
}

.name-box .drop {
  display: flex;
  margin-left: 3px;
}

.formula-buttons {
  display: flex;
  width: 112px;
  padding-left: 40px;
  gap: 8px;
  background: linear-gradient(#e4e3df, #d5d4cb);
  border-right: 1px solid #999;
}

.formula-buttons button {
  width: 26px;
}

.fx {
  font-family: "Liberation Serif", serif;
  font-style: italic;
  font-weight: bold;
  font-size: 13px;
}

.formula {
  flex: 1;
  padding: 0 4px;
}

/* sheet */
.workbook {
  display: flex;
  flex: 1;
  min-height: 0;
}

.sheet {
  position: relative;
  flex: 1;
  min-width: 0;
  overflow: hidden;
  background: #fff;
  font-family: "Liberation Sans", Arial, sans-serif;
}

#grid {
  table-layout: fixed;
  width: 100%;
  min-width: 1348px;
  border-collapse: separate;
  border-spacing: 0;
  font-size: 12px;
  line-height: 12px;
}

#grid tr {
  height: 15px;
}

#grid tr.tall {
  height: 27px;
}

#grid th, #grid td {
  padding: 0;
  border: 0 solid #c0c0c0;
  border-width: 0 1px 1px 0;
  white-space: pre;
}

#grid th {
  border-color: #808080;
  background: #e2e1dc;
  font-weight: normal;
}

#grid th.on {
  background: #fff6c8;
  border-color: #d6b630;
}

#grid td.cell {
  border-color: #000;
  text-align: center;
}

#grid td.small {
  font-size: 11px;
  vertical-align: bottom;
  line-height: 11px;
}

#grid td.label {
  font-size: 10px;
  vertical-align: bottom;
  line-height: 11px;
}

#grid td.item {
  font-size: 11px;
}

#grid td.num {
  padding-left: 1px;
  text-align: left;
  font-size: 10px;
  font-weight: bold;
}

#grid td.left {
  padding-left: 2px;
  text-align: left;
}

#grid td.low {
  vertical-align: bottom;
}

#grid td.r2 {
  border-right-width: 2px;
}

#grid td.b2 {
  border-bottom-width: 2px;
}

#grid td.noright {
  border-right-color: #c0c0c0;
}

#grid td.dark {
  background: #000;
}

#grid td.title {
  font-size: 21px;
  line-height: 24px;
  font-weight: bold;
}

#grid td.rate {
  font-size: 14px;
}

#grid td.big {
  font-size: 23px;
  line-height: 24px;
  font-weight: bold;
}

#grid td.bold {
  font-weight: bold;
}

#grid td.current {
  position: relative;
  outline: 2px solid #111;
}

#grid td.current::after {
  content: "";
  position: absolute;
  right: -3px;
  bottom: -3px;
  width: 6px;
  height: 6px;
  background: #111;
  border: 1px solid #fff;
  border-width: 1px 0 0 1px;
}

.mark {
  position: absolute;
  border: 3px solid #f00;
}

.mark-stop {
  left: 591px;
  top: 14px;
  width: 73px;
  height: 29px;
}

.mark-day {
  left: 411px;
  top: 145px;
  width: 39px;
  height: 108px;
}

.chart {
  position: absolute;
  background: #fff;
  border: 1px solid #000;
  font-family: "Liberation Sans", Arial, sans-serif;
}

.chart-temp {
  left: 38px;
  top: 255px;
}

.chart-hum {
  left: 37px;
  top: 389px;
}

.chart .plot {
  fill: #c0c0c0;
  stroke: #808080;
}

.chart .axis {
  stroke: #000;
  fill: none;
}

.chart .series {
  stroke: #000080;
  fill: none;
}

.chart text {
  font-weight: bold;
  font-size: 9px;
}

.chart text.scale-small {
  font-size: 8px;
}

.chart text.heading {
  font-size: 11px;
}

.chart text.point {
  font-size: 6px;
}

.chart text.point-light {
  font-size: 7px;
  font-weight: normal;
}

/* scroll bars */
.vscroll {
  display: flex;
  flex-direction: column;
  width: 18px;
  flex: none;
  background: #e8e7e3;
  border-left: 1px solid #a5a290;
}

.split {
  height: 8px;
  border: 2px solid #c9c7bb;
  background: #fff;
}

.vscroll button {
  height: 15px;
  border: 1px solid #bbb;
  background: linear-gradient(#f6f6f4, #d8d7d2);
}

.vscroll button::after, .hscroll button::after {
  content: "";
  border: 5px solid transparent;
}

.vscroll .up::after {
  border-bottom-color: #555;
  border-top: none;
}

.vscroll .down::after {
  border-top-color: #555;
  border-bottom: none;
}

.vtrack {
  flex: 1;
  padding-top: 11px;
}

.vthumb {
  height: 76%;
  border: 1px solid #999;
  border-right: none;
  background:
    repeating-linear-gradient(#777 0 1px, transparent 1px 3px) center / 8px 8px no-repeat,
    linear-gradient(to right, #f3f3f1 45%, #d0d0cc 50%, #dededa);
}

.sheet-bar {
  display: flex;
  flex: none;
  height: 18px;
  border-top: 1px solid #999;
  background: linear-gradient(#d8d7cd, #e6e5e0);
}

.sheet-nav {
  display: flex;
  align-items: center;
  width: 82px;
}

.sheet-nav button {
  width: 16px;
}

.sheet-tabs {
  display: flex;
  flex: 1;
  overflow: hidden;
  font-size: 14px;
}

.sheet-tab {
  position: relative;
  padding: 0 12px;
}

.sheet-tab::before {
  content: "";
  position: absolute;
  inset: 0 0 1px 0;
  transform: skewX(-45deg);
  background: linear-gradient(#dddcd4, #e9e8e4);
  border: 1px solid #a5a290;
  border-width: 0 1px 1px 0;
}

.sheet-tab.active::before {
  left: -20px;
  background: #fff;
}

.sheet-tab span {
  position: relative;
  display: flex;
}

.sheet-tab.active {
  padding: 0 14px 0 10px;
}

.hscroll {
  display: flex;
  width: 40%;
  border-bottom: 1px solid #999;
  background: #ebebe8;
}

.hsplit {
  width: 7px;
  border: 2px solid #c9c7bb;
  background: #fff;
}

.hscroll button {
  width: 16px;
}

.hscroll .left::after {
  border-right-color: #444;
  border-left: none;
}

.hscroll .right::after {
  border-left-color: #444;
  border-right: none;
}

.htrack {
  flex: 1;
}

.hthumb {
  width: 98%;
  height: 100%;
  border: 1px solid #888;
  border-top: none;
  background:
    repeating-linear-gradient(to right, #777 0 1px, transparent 1px 3px) center / 8px 8px no-repeat,
    linear-gradient(#e8e8e5, #d0d0cc 50%, #b5b5b0 55%, #c4c4c0);
}

.corner {
  width: 20px;
}

/* drawing toolbar */
.draw-row {
  height: 26px;
  border-bottom: 1px solid #aaa69b;
}

.draw > .drop {
  width: 10px;
}

.draw > .drop.wide {
  width: 14px;
}

.draw > .draw-label {
  width: 47px;
}

/* status bar */
.statusbar {
  display: flex;
  align-items: center;
  justify-content: flex-end;
  flex: none;
  height: 22px;
  border-bottom: 1px solid #aaa;
  background: linear-gradient(#e6e5e0, #d3d2c8);
}

.view {
  width: 22px;
  height: 21px;
}

.view.active {
  border: 1px solid #d08a2c;
  border-radius: 2px;
  background: #fdeebb;
}

.statusbar .drop {
  display: flex;
  margin: 0 2px;
}

.status-sep {
  width: 1px;
  height: 18px;
  background: #8ea6c8;
}

.zoom-text {
  width: 44px;
  padding-left: 8px;
}

.round {
  width: 17px;
  height: 17px;
  border: 1px solid #888;
  border-radius: 50%;
  background: linear-gradient(#fff, #ddd);
}

input[type="range"] {
  appearance: none;
  width: 97px;
  height: 14px;
  margin: 0 2px;
  background:
    linear-gradient(#bbb, #bbb) 48px center / 1px 10px no-repeat,
    linear-gradient(#aaa, #aaa) center / 100% 1px no-repeat;
}

input[type="range"]::-webkit-slider-thumb {
  appearance: none;
  width: 14px;
  height: 14px;
  border: 1px solid #888;
  border-radius: 50%;
  background: linear-gradient(#fff, #ddd);
}

/* taskbar */
.taskbar {
  display: flex;
  flex: none;
  height: 48px;
  padding-top: 1px;
  gap: 5px;
  background: linear-gradient(to right, #4a687b, #50718a 30%, #476778 55%, #4f7389 80%, #456a7a);
  color: #fff;
}

.start {
  width: 57px;
  padding-left: 3px;
}

.task {
  width: 68px;
  height: 46px;
}

.task.open {
  border: 1px solid #9badb8;
  background: #71899a;
}

.task.current {
  border: 1px solid #e8eef2;
  background: #94a5b0;
}

.tray {
  display: flex;
  align-items: center;
  gap: 12px;
  margin-left: auto;
  padding-right: 19px;
  font-family: "Open Sans", sans-serif;
  font-size: 14px;
}

.tray-up {
  margin-right: 13px;
}

.lang, .clock {
  display: flex;
  flex-direction: column;
  text-align: center;
  line-height: 22px;
}

.lang {
  width: 40px;
}

.clock {
  width: 80px;
}
```
FILE: script.js
```
const columns = 'A B C D E F G H I J K L M N O P Q R S T U V W X Z AA AB AC AD AE AF AG AH AI AJ AK AL AM AN'.split(' ');

function columnWidth(name) {
  if (name === 'A') return 11;
  if (name === 'B') return 50;
  if (name === 'C') return 37;
  if (name.length === 1 && name <= 'Q') return 36;
  if (name.length === 1 && name <= 'W') return 34;
  return 32;
}

// columns B to Q, rows 3 to 16
const eggRows = [
  ['day', 'Date', 18, 19, 20, 21, 22, 23, 24, 25, 26, 27, 28, 29, 30, 31, 1],
  ['count', 'Days', 'Set 0', 1, 2, 3, 4, 5, 6, 7, 8, 9, 10, 11, 12, 13, 14],
  ['num', '`F  Hi', 100.8, 100.4, 101, 100.9, 100.9, 100.8, 101.1, 101.7, 101.6, 101.4, 101.7, 101.5, 101.3, 101.2, 101],
  ['num', '`F Low', 98.9, 99, 99, 99.6, 99.4, 99.3, 98.7, 98.9, 98.7, 98.2, 98.2, 98.4, 99.4, 98.9, 99],
  ['num', '`F Avg', 99.85, 99.7, 100, 100.3, 100.2, 100.1, 99.9, 100.3, 100.2, 99.8, 99.95, 99.95, 100.4, 100.1, 100],
  ['num', 'Humidity', 35, 40, 42, 37, 39, 40, 35, 36, 34, 32, 36, 38, 36, 32, 35],
  ['num', 'Candle +', '', '', '', '', '', '', '', 72, '', '', '', '', '', '', 72],
  ['day', 'Date', 2, 3, 4, 5, 6, 7, 8, 9, 10, 11, 12, 13, 14, 15, null],
  ['count', 'Days', 15, 16, 17, 18, 19, 20, 21, 22, 23, 24, 25, 26, 27, 28, 'AVG'],
  ['num', '`F  Hi', 101.2, 101.3, 101.7, 101.7, 101.6, 101.7, 101.9, 102.1, 101.9, 102.1, 101.9, 101.7, 101.9, 101.6, 101.4],
  ['num', '`F Low', 99.8, 99.8, 98.4, 98.4, 98.3, 98.2, 98.4, 98.3, 98.6, 98.1, 98.4, 98.6, 98.7, 98.9, 98.78],
  ['num', '`F Avg', 100.5, 100.6, 100.1, 100.1, 99.95, 99.95, 100.2, 100.2, 100.3, 100.1, 100.2, 100.2, 100.3, 100.3, 100.1],
  ['num', 'Humidity', 36, 37, 35, 40, 42, 40, 41, 40, 39, 59, 62, 64, 65, 66, 41.83],
  ['num', 'Candle +', '', '', '', 71, '', '', '', '', '', 71, '', '', '', '', null]
];

function td(text, cls = '', colspan = 1, rowspan = 1) {
  return `<td class="${cls}" colspan="${colspan}" rowspan="${rowspan}">${text}</td>`;
}

// merged cells in columns R to X
const summary = {
  3: td('Number of Eggs Set', 'cell label r2 b2', 5) + td('75', 'cell r2 b2', 2),
  4: td('Hatched Poults', 'cell item r2 b2', 5) + td('69', 'cell item r2 b2', 2),
  5: td('Dead In Shell', 'cell item r2 b2', 5) + td('1', 'cell item r2 b2', 2),
  6: td('Fertilized Undeveloped', 'cell item r2 b2', 5) + td('0', 'cell item r2 b2', 2),
  7: td('Unfertilized', 'cell item r2 b2', 5) + td('', 'cell r2 b2', 2),
  8: td('Hatch Rate %', 'cell rate r2 b2', 5, 2) + td('92', 'cell big b2 noright', 2, 2),
  9: '',
  10: td('Notes', 'cell bold b2 noright', 7),
  11: td('BSW', 'cell b2 noright', 7, 6)
};

function eggCells(row) {
  const [kind, label, ...values] = eggRows[row - 3];
  const thick = [4, 9, 11, 16].includes(row) ? ' b2' : '';
  let html = td(label, 'cell label r2 b2');
  values.forEach((value, i) => {
    const last = i === values.length - 1;
    let cls = 'cell' + thick;
    if (kind === 'num') cls += ' num';
    if (kind === 'day' && !(row === 3 && i === 0)) cls += ' small';
    if (last) cls += ' r2';
    if (last && row > 11) cls += ' b2';
    if (value === null) cls += ' dark';
    if (value === 'AVG') cls += ' left';
    html += td(value === null ? '' : value, cls);
  });
  return html;
}

function blanks(row, from) {
  let html = '';
  for (let i = from; i <= columns.length; i++) {
    html += td('', row === 27 && columns[i] === 'AB' ? 'current' : '');
  }
  return html;
}

function buildGrid() {
  let html = '<colgroup><col style="width:27px">';
  columns.forEach(c => html += `<col style="width:${columnWidth(c)}px">`);
  html += '<col></colgroup><tr><th></th>';
  columns.forEach(c => html += `<th class="${c === 'AB' ? 'on' : ''}">${c}</th>`);
  html += '<th></th></tr>';

  for (let row = 2; row <= 34; row++) {
    html += `<tr class="${row === 2 ? 'tall' : ''}"><th class="${row === 27 ? 'on' : ''}">${row}</th>`;
    if (row > 16) {
      html += blanks(row, 0) + '</tr>';
      continue;
    }
    html += td('', 'cell r2');
    if (row === 2) {
      html += td('Turkey Egg Data', 'cell title r2 b2', 9)
        + td('Eggs Set', 'cell left low r2 b2', 2)
        + td('18/12/2015', 'cell left low r2 b2', 2)
        + td('Stop Turning', 'cell left low r2 b2', 2)
        + td('11/01/2016', 'cell left low r2 b2', 2)
        + td('Hatch Due', 'cell left low r2 b2', 2)
        + td('15/01/2016', 'cell low b2 noright', 4);
    } else {
      html += eggCells(row) + (summary[row] || '');
    }
    html += blanks(row, 24) + '</tr>';
  }
  document.getElementById('grid').innerHTML = html;
}

function drawChart(id, opt) {
  const { x, y, w, h, min, max, step, values } = opt;
  const slot = w / values.length;
  const py = v => y + h - (v - min) / (max - min) * h;
  let out = `<rect class="plot" x="${x}" y="${y}" width="${w}" height="${h}"/>`;
  let ticks = `M${x} ${y}V${y + h}H${x + w}`;

  for (let v = min; v <= max; v += step) {
    ticks += `M${x - 4} ${py(v)}H${x}`;
    out += `<text class="${opt.scaleClass}" x="${x - 8}" y="${py(v) + 2}" text-anchor="end">${v.toFixed(opt.decimals)}</text>`;
  }
  values.forEach((v, i) => {
    const cx = x + slot * (i + 0.5);
    const label = i === 0 ? 'Set 0' : i === values.length - 1 ? 'AVG' : i;
    ticks += `M${x + slot * (i + 1)} ${y + h}v4`;
    out += `<text transform="translate(${cx + 2} ${y + h + 7}) rotate(-90)" text-anchor="end">${label}</text>`;
  });
  out += `<path class="axis" d="${ticks}"/>`;
  out += `<polyline class="series" points="${values.map((v, i) => (x + slot * (i + 0.5)) + ',' + py(v)).join(' ')}"/>`;
  values.forEach((v, i) => {
    const px = x + slot * (i + 0.5);
    const shift = i === values.length - 1 ? opt.lastShift : 5;
    out += `<text class="${opt.pointClass}" x="${px + shift}" y="${py(v) + 1}">${opt.decimals ? v.toFixed(2) : v}</text>`;
  });
  out += `<text class="heading" x="${opt.titleX}" y="${opt.titleY}" text-anchor="middle">${opt.title}</text>`;
  document.getElementById(id).innerHTML = out;
}

buildGrid();

drawChart('tempChart', {
  x: 39.5, y: 8.5, w: 778, h: 91, min: 98, max: 101, step: 0.25, decimals: 2,
  title: 'Average Tempurature', titleX: 423, titleY: 78,
  scaleClass: 'scale-small', pointClass: 'point', lastShift: -10,
  values: [99.85, 99.7, 100, 100.25, 100.15, 100.05, 99.9, 100.3, 100.15, 99.8, 99.95, 99.95, 100.35, 100.05, 100,
    100.5, 100.55, 100.05, 100.05, 99.95, 99.95, 100.15, 100.2, 100.25, 100.1, 100.15, 100.15, 100.3, 100.25, 100.11]
});

drawChart('humChart', {
  x: 45.5, y: 9.5, w: 769, h: 102, min: 30, max: 70, step: 5, decimals: 0,
  title: 'Average Humidity', titleX: 423, titleY: 42,
  scaleClass: 'scale', pointClass: 'point-light', lastShift: -16,
  values: [35, 40, 42, 37, 39, 40, 35, 36, 34, 32, 36, 38, 36, 32, 35,
    36, 37, 35, 40, 42, 40, 41, 40, 39, 59, 62, 64, 65, 66, 41.82759]
});
```
